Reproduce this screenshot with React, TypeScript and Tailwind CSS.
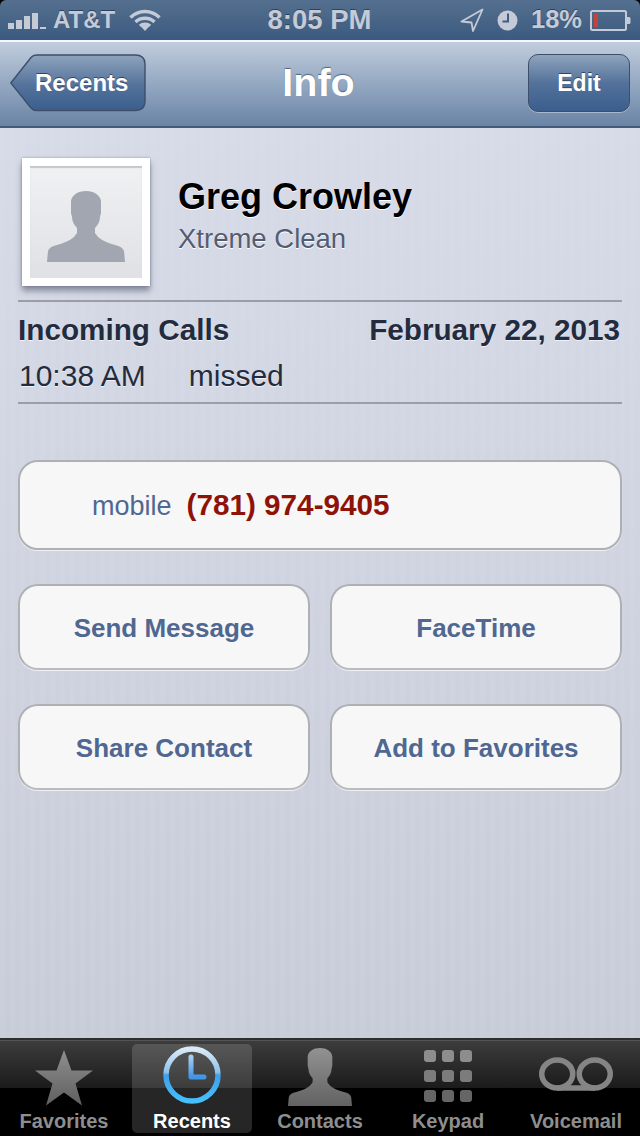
const font = "font-['Liberation_Sans',Arial,sans-serif]";

const personPath =
  "M0 71L1 60C2 57 5 55 10 54C17 52 22 50 27 46L30 42L30 37C27 34 25 30 25 26L24 22V10C25 4 31 0 39 0C47 0 53 4 54 10V22L53 26C53 30 51 34 48 37L48 42L51 46C56 50 61 52 68 54C73 55 76 57 77 60L78 71Z";

function StatusBar() {
  return (
    <div className="flex h-10 items-center justify-between bg-gradient-to-b from-[#55708f] to-[#3b5a80] pl-2 pr-[9px] text-[#c4cbd7] [text-shadow:0_-1px_0_#2b4262]">
      <div className="flex w-[220px] items-center">
        <svg width="38" height="20" viewBox="0 0 38 20" fill="currentColor">
          <rect x="0" y="13" width="6" height="6" />
          <rect x="8" y="10" width="6" height="9" />
          <rect x="16" y="6" width="6" height="13" />
          <rect x="24" y="3" width="6" height="16" />
          <rect x="32" y="17" width="6" height="2" />
        </svg>
        <span className="ml-[7px] text-[24px] leading-none font-bold">AT&amp;T</span>
        <svg className="ml-[14px]" width="32" height="22" viewBox="0 0 32 22" fill="none" stroke="currentColor" strokeWidth="3.4">
          <path d="M1.5 8.5C9.5 0.5 22.5 0.5 30.5 8.5" />
          <path d="M6.5 13C11.5 8 20.5 8 25.5 13" />
          <path d="M11 17C13.5 14.5 18.5 14.5 21 17" />
          <path d="M16 22l-4-4.5c2-1.6 6-1.6 8 0z" fill="currentColor" stroke="none" />
        </svg>
      </div>
      <span className="text-[27.5px] leading-none font-bold">8:05 PM</span>
      <div className="flex w-[220px] items-center justify-end">
        <svg width="24" height="24" viewBox="0 0 24 24" fill="none" stroke="currentColor" strokeWidth="1.8" strokeLinejoin="round">
          <path d="M22.5 1.5L1.5 13.500L11.5 14.500L13 23Z" />
        </svg>
        <svg className="ml-[13px]" width="21" height="21" viewBox="0 0 21 21">
          <circle cx="10.5" cy="10.5" r="10" fill="currentColor" />
          <path d="M11 3.5V11.5H5.5" fill="none" stroke="#3f5d82" strokeWidth="2" />
        </svg>
        <span className="ml-[13px] text-[25.5px] leading-none font-bold">18%</span>
        <svg className="ml-2" width="41" height="21" viewBox="0 0 41 21">
          <rect x="1" y="1" width="35" height="19" rx="1.5" fill="none" stroke="currentColor" strokeWidth="2" />
          <rect x="4" y="4" width="4" height="13" fill="#c5423d" />
          <path d="M37 7h2a1.5 1.5 0 0 1 1.5 1.5v4a1.5 1.5 0 0 1-1.5 1.5h-2z" fill="currentColor" />
        </svg>
      </div>
    </div>
  );
}

function NavBar() {
  return (
    <div className="grid h-[88px] grid-cols-[1fr_auto_1fr] items-center border-t-2 border-b-2 border-t-[#f4f6f9] border-b-[#435a7a] bg-gradient-to-b from-[#c0cddd] to-[#6a84a6] px-[10px] pb-[2px]">
      <button className="relative h-[58px] w-[136px] text-left">
        <svg className="absolute inset-0" width="136" height="58" viewBox="0 0 136 58">
          <defs>
            <linearGradient id="backFill" x1="0" y1="0" x2="0" y2="1">
              <stop offset="0" stopColor="#8fa3bc" />
              <stop offset="0.55" stopColor="#53729b" />
              <stop offset="1" stopColor="#3b5e8d" />
            </linearGradient>
          </defs>
          <path
            d="M0.8 29L21 3.5Q23 1 26.5 1H125Q135 1 135 10V47Q135 56.500 125 56.500H26.500Q23 56.500 21 54Z"
            fill="url(#backFill)"
            stroke="#3d4f69"
            strokeWidth="1.4"
          />
        </svg>
        <span className={`${font} absolute top-[15px] left-[25px] text-[24px] leading-[28px] font-bold text-white [text-shadow:0_-1px_0_#2f4566]`}>
          Recents
        </span>
      </button>
      <h1 className={`${font} mr-[3px] text-[39.5px] leading-none font-bold text-white [text-shadow:0_-1px_1px_#4d6482]`}>Info</h1>
      <button
        className={`${font} h-[58px] w-[102px] justify-self-end rounded-[10px] border border-[#3d4f69] bg-gradient-to-b from-[#8fa3bc] via-[#53729b] to-[#3b5e8d] text-[23px] font-bold text-white shadow-[0_1px_0_#a9b9cd] [text-shadow:0_-1px_0_#2f4566]`}
      >
        Edit
      </button>
    </div>
  );
}

function Avatar() {
  return (
    <div className="h-[128px] w-[128px] shrink-0 bg-white p-2 shadow-[0_5px_6px_rgba(70,78,100,0.55),0_0_2px_rgba(70,78,100,0.5)]">
      <div className="flex h-[112px] w-[112px] items-end justify-center bg-gradient-to-b from-[#f0f1f3] to-[#e0e1e4] pb-4 shadow-[inset_0_2px_1px_#c4c6cb]">
        <svg width="78" height="71" viewBox="0 0 78 71" fill="#a2a6b0">
          <path d={personPath} />
        </svg>
      </div>
    </div>
  );
}

function ActionButton({ label }: { label: string }) {
  return (
    <button className="h-[86px] rounded-[20px] border-2 border-[#aeb0b4] border-b-[#b9bbbf] bg-[#f7f7f7] pt-[2px] text-[26px] font-bold text-[#4f6791] shadow-[0_1px_0_#eef0f4]">
      {label}
    </button>
  );
}

function Star() {
  return (
    <svg className="mt-[2px]" width="60" height="56" viewBox="0 0 60 56">
      <defs>
        <linearGradient id="tabGray" x1="0" y1="0" x2="0" y2="1">
          <stop offset="0" stopColor="#8f8f8f" />
          <stop offset="1" stopColor="#5f5f5f" />
        </linearGradient>
      </defs>
      <path d="M30 0L37.500 20.500H59L41.500 33.500L48 55.500L30 42.500L12 55.500L18.500 33.500L1 20.500H22.500Z" fill="url(#tabGray)" />
    </svg>
  );
}

function ClockIcon() {
  return (
    <svg className="mb-1" width="60" height="60" viewBox="0 0 60 60">
      <defs>
        <linearGradient id="clockRing" x1="0" y1="0" x2="0" y2="1">
          <stop offset="0" stopColor="#dbe9f6" />
          <stop offset="0.45" stopColor="#8ec1ec" />
          <stop offset="0.5" stopColor="#3f9fea" />
          <stop offset="1" stopColor="#45c0fb" />
        </linearGradient>
        <linearGradient id="clockHand" x1="0" y1="0" x2="0" y2="1">
          <stop offset="0" stopColor="#a9cdf0" />
          <stop offset="1" stopColor="#3f95ea" />
        </linearGradient>
      </defs>
      <circle cx="30" cy="30" r="26" fill="none" stroke="url(#clockRing)" strokeWidth="5.500" />
      <path d="M29 12V32H42" fill="none" stroke="url(#clockHand)" strokeWidth="5" strokeLinecap="round" strokeLinejoin="round" />
    </svg>
  );
}

function PersonIcon() {
  return (
    <svg width="64" height="58" viewBox="0 0 78 71" preserveAspectRatio="none">
      <defs>
        <linearGradient id="personGray" x1="0" y1="0" x2="0" y2="1">
          <stop offset="0" stopColor="#929292" />
          <stop offset="1" stopColor="#626262" />
        </linearGradient>
      </defs>
      <path d={personPath} fill="url(#personGray)" />
    </svg>
  );
}

function KeypadIcon() {
  return (
    <div className="mb-[2px] grid grid-cols-3 gap-x-[6px] gap-y-2">
      {[0, 1, 2, 3, 4, 5, 6, 7, 8].map((n) => (
        <div
          key={n}
          className={`h-3 w-3 rounded-[3px] ${n < 3 ? "bg-[#8d8d8d]" : n < 6 ? "bg-[#7c7c7c]" : "bg-[#666666]"}`}
        />
      ))}
    </div>
  );
}

function VoicemailIcon() {
  return (
    <svg className="mb-[6px]" width="74" height="34" viewBox="0 0 74 34" fill="none" stroke="#858585" strokeWidth="5.500">
      <ellipse cx="18.250" cy="17" rx="15.500" ry="14" />
      <ellipse cx="55.750" cy="17" rx="15.500" ry="14" />
      <path d="M18 31H56" />
    </svg>
  );
}

function TabItem({ label, active, children }: { label: string; active?: boolean; children: React.ReactNode }) {
  return (
    <div
      className={`mx-1 mt-[4px] mb-[4px] flex flex-col items-center rounded-[5px] ${
        active ? "bg-white/15" : ""
      }`}
    >
      <div className="flex h-[65px] items-center justify-center">{children}</div>
      <span
        className={`text-[20px] leading-[24px] font-bold ${active ? "text-white" : "text-[#8e8e8e]"}`}
      >
        {label}
      </span>
    </div>
  );
}

export default function App() {
  return (
    <div className={`${font} h-[1136px] w-[640px] overflow-hidden bg-black`}>
      <div className="flex h-full flex-col overflow-hidden rounded-t-[6px]">
        <StatusBar />
        <NavBar />
        <main className="flex flex-1 flex-col bg-[image:repeating-linear-gradient(90deg,rgba(255,255,255,0.04)_0,rgba(255,255,255,0.04)_5px,rgba(0,0,0,0)_5px,rgba(0,0,0,0)_10px),linear-gradient(180deg,#d7dbe7,#c8ccd9)] px-[18px] pt-[30px]">
          <div className="flex items-center pl-1">
            <Avatar />
            <div className="-mt-[12px] ml-7">
              <h2 className="text-[36px] leading-[42px] font-bold text-black [text-shadow:0_1px_0_#ffffff]">Greg Crowley</h2>
              <p className="mt-[3px] text-[27.5px] leading-[36px] text-[#535c72] [text-shadow:0_1px_0_#ffffff]">Xtreme Clean</p>
            </div>
          </div>
          <div className="mt-[14px] border-y-2 border-y-[#9b9ea6] pt-2 pb-[6px] text-[#232c3f] [text-shadow:0_1px_0_#eef0f5]">
            <div className="flex items-center justify-between text-[29.7px] leading-[40px] font-bold">
              <span>Incoming Calls</span>
              <span className="mr-[2px]">February 22, 2013</span>
            </div>
            <div className="mt-[6px] flex pl-[1px] text-[30px] leading-[40px]">
              <span>10:38 AM</span>
              <span className="ml-[43px]">missed</span>
            </div>
          </div>
          <button className="mt-[56px] flex h-[90px] items-baseline rounded-[20px] border-2 border-[#aeb0b4] bg-[#f7f7f7] pt-[26px] pl-[72px] shadow-[0_1px_0_#eef0f4]">
            <span className="text-[27px] leading-[34px] text-[#4f6791]">mobile</span>
            <span className="ml-[15px] text-[29.7px] leading-[34px] font-bold text-[#8f1206]">(781) 974-9405</span>
          </button>
          <div className="mt-[34px] grid grid-cols-2 gap-x-5 gap-y-[34px]">
            <ActionButton label="Send Message" />
            <ActionButton label="FaceTime" />
            <ActionButton label="Share Contact" />
            <ActionButton label="Add to Favorites" />
          </div>
        </main>
        <nav className="grid h-[98px] shrink-0 grid-cols-5 border-t-2 border-t-[#2e2e2e] bg-[linear-gradient(180deg,#3d3d3d_0,#1b1b1b_48px,#000000_48px)] shadow-[inset_0_1px_0_#555555]">
          <TabItem label="Favorites"><Star /></TabItem>
          <TabItem label="Recents" active><ClockIcon /></TabItem>
          <TabItem label="Contacts"><PersonIcon /></TabItem>
          <TabItem label="Keypad"><KeypadIcon /></TabItem>
          <TabItem label="Voicemail"><VoicemailIcon /></TabItem>
        </nav>
      </div>
    </div>
  );
}
